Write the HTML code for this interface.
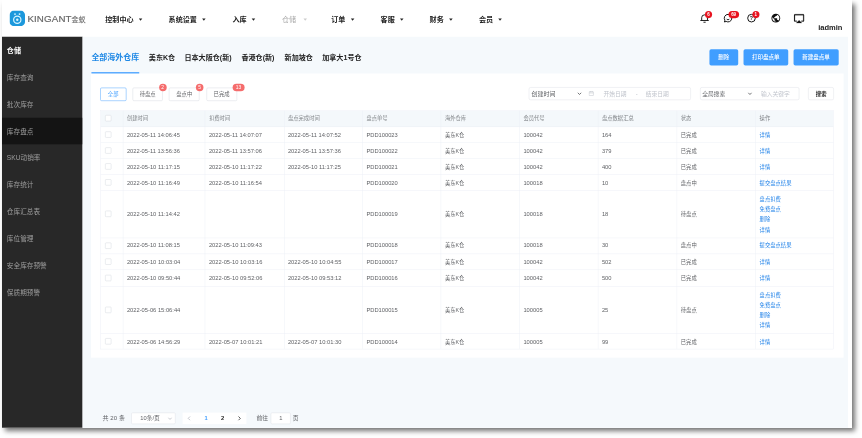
<!DOCTYPE html>
<html lang="zh-CN">
<head>
<meta charset="utf-8">
<title>库存盘点</title>
<style>
*{box-sizing:border-box;margin:0;padding:0}
html,body{width:862px;height:438px;overflow:hidden;background:#fff}
body{position:relative;font-family:"Liberation Sans","Noto Sans CJK SC",sans-serif}
#shadow{position:absolute;left:2px;top:1px;width:850.1px;height:426.6px;background:#fff;box-shadow:3px 3px 5px rgba(0,0,0,.55)}
#page{position:absolute;left:2px;top:0;width:1920px;height:966px;transform:scale(0.4427);transform-origin:0 0;filter:grayscale(0);background:#fff;overflow:hidden;font-size:13px;color:#606266}
#page div,#page span,#page svg{position:absolute}
#page span span{position:static}
.nav{font-size:16px;font-weight:bold;color:#222;top:33px;line-height:22px;white-space:nowrap}
.nav i{position:absolute;right:-20px;top:9px;border:4.500px solid transparent;border-top:5.500px solid #222;border-bottom:0}
.side{left:0;top:82.7px;width:181.6px;height:900px;background:#282828}
.side span{left:11px;font-size:15px;color:#9e9e9e;line-height:20px;white-space:nowrap}
.main{left:181.6px;top:82.7px;width:1729.4px;height:900px;background:#f5f9fc}
.tab{font-size:16px;font-weight:bold;color:#222;top:116.9px;line-height:26px;white-space:nowrap}
.btn{background:#409eff;color:#fff;font-size:12.500px;font-weight:500;text-align:center;border-radius:4px;top:110.7px;height:37.5px;line-height:37.5px;white-space:nowrap}
.panel{left:201.0px;top:166.3px;width:1699.6px;height:641.3px;background:#fff}
.fb{top:197.7px;height:30.7px;line-height:28.7px;border:1px solid #d4d8df;border-radius:3px;font-size:12px;color:#606266;text-align:center;background:#fff;white-space:nowrap}
.bdg{background:#f56c6c;color:#fff;font-size:11px;height:17px;line-height:17px;border-radius:9px;text-align:center;min-width:17px;padding:0 5px}
.inp{top:196.7px;height:29.4px;border:1px solid #dcdfe6;border-radius:4px;background:#fff}
.inp span{top:0;line-height:27.4px;font-size:13px;white-space:nowrap}
.tbl{left:221.6px;top:248.5px;width:1657.8px;height:540.5px;border:1px solid #ebeef5;background:#fff}
.hl{left:0;width:100%;height:1px;background:#ebeef5}
.vl{top:0;height:100%;width:1px;background:#ebeef5}
.th{left:0;top:0;width:100%;background:#f4f8fb}
.c{font-size:13px;color:#606266;white-space:nowrap;line-height:18px}
.hc{font-size:12px;color:#808488;white-space:nowrap;line-height:18px}
.a{font-size:12px;color:#1e80e8;white-space:nowrap;line-height:18px}
.cb{width:14px;height:14px;border:1px solid #d2d6dd;border-radius:2px;background:#fff}
.ph{color:#c0c4cc}
.z{font-size:12px}
.f14{font-size:13.6px}
.pg{font-size:13px;color:#606266;white-space:nowrap;line-height:18px}
</style>
</head>
<body>
<div id="shadow"></div>
<div id="page">
<svg style="left:16.5px;top:23.5px" width="35" height="35" viewBox="0 0 34 34"><rect width="34" height="34" rx="9.500" fill="#1c98dc"/><circle cx="17" cy="20" r="8" fill="none" stroke="#d6f4ff" stroke-width="2.6"/><circle cx="17" cy="20" r="2.6" fill="#d6f4ff"/><circle cx="12" cy="7.5" r="2" fill="#d6f4ff"/><circle cx="22" cy="7.5" r="2" fill="#d6f4ff"/></svg>
<span style="left:57.4px;top:28.5px;font-size:22px;line-height:28px;color:#666;letter-spacing:0.3px;-webkit-text-stroke:0.4px #666;white-space:nowrap">KINGANT</span>
<span style="left:157.0px;top:32.0px;font-size:16px;line-height:24px;color:#707070;-webkit-text-stroke:0.3px #707070;white-space:nowrap">金蚁</span>
<span class="nav" style="left:233.3px">控制中心<i></i></span>
<span class="nav" style="left:376.3px">系统设置<i></i></span>
<span class="nav" style="left:520.4px">入库<i></i></span>
<span class="nav" style="left:632.3px;color:#aaa;font-weight:normal">仓储<i style="right:-25px;border-top-color:#ccc"></i></span>
<span class="nav" style="left:743.8px">订单<i></i></span>
<span class="nav" style="left:855.2px">客服<i></i></span>
<span class="nav" style="left:965.9px">财务<i></i></span>
<span class="nav" style="left:1077.3px">会员<i></i></span>
<svg style="left:1575.9px;top:30.3px" width="22" height="22" viewBox="0 0 22 22"><path d="M4.500 16V10a6.500 6.500 0 0 1 13 0V16" fill="none" stroke="#111" stroke-width="2.100"/><path d="M1.500 16.300H20.500" stroke="#111" stroke-width="2.100"/><path d="M8.500 20.200H13.500" stroke="#111" stroke-width="2.100"/></svg>
<svg style="left:1628.7px;top:30.3px" width="22" height="22" viewBox="0 0 22 22"><path d="M11 2.500a8.500 8.500 0 1 1-4.200 15.900L2.800 19.600L3.900 15.700A8.500 8.500 0 0 1 11 2.500z" fill="none" stroke="#111" stroke-width="2.200" stroke-linejoin="round"/><path d="M7.500 12.500a4 4 0 0 0 7 0" fill="none" stroke="#111" stroke-width="2.100"/></svg>
<svg style="left:1681.8px;top:30.3px" width="22" height="22" viewBox="0 0 22 22"><circle cx="11" cy="11" r="8.600" fill="none" stroke="#111" stroke-width="2.200"/><text x="11" y="15.500" font-size="12" font-weight="bold" text-anchor="middle" fill="#222" font-family="Liberation Sans,sans-serif">?</text></svg>
<svg style="left:1735.5px;top:29.3px" width="24" height="24" viewBox="0 0 24 24"><path d="M12 2C6.480 2 2 6.480 2 12s4.480 10 10 10 10-4.480 10-10S17.520 2 12 2zm-1 17.930c-3.950-.49-7-3.850-7-7.930 0-.62.080-1.210.21-1.790L9 15v1c0 1.100.9 2 2 2v1.930zm6.900-2.540c-.26-.81-1-1.390-1.900-1.390h-1v-3c0-.55-.45-1-1-1H8v-2h2c.55 0 1-.45 1-1V7h2c1.100 0 2-.9 2-2v-.41c2.930 1.190 5 4.060 5 7.410 0 2.080-.8 3.970-2.100 5.390z" fill="#111"/></svg>
<svg style="left:1788.3px;top:28.8px" width="25" height="25" viewBox="0 0 24 24"><path d="M6 22h12l-6-6zM21 3H3c-1.100 0-2 .9-2 2v12c0 1.100.9 2 2 2h4v-2H3V5h18v12h-4v2h4c1.100 0 2-.9 2-2V5c0-1.100-.9-2-2-2z" fill="#111" stroke="#111" stroke-width="0.500"/></svg>
<span style="left:1588.1px;top:25.0px;width:16px;height:16px;line-height:16px;border-radius:8px;background:#e8131f;color:#fff;font-size:10px;text-align:center;font-weight:bold">6</span>
<span style="left:1640.6px;top:25.0px;width:24px;height:16px;line-height:16px;border-radius:8px;background:#e8131f;color:#fff;font-size:10px;text-align:center;font-weight:bold">69</span>
<span style="left:1694.5px;top:25.0px;width:16px;height:16px;line-height:16px;border-radius:8px;background:#e8131f;color:#fff;font-size:10px;text-align:center;font-weight:bold">1</span>
<span style="left:1843.7px;top:50.1px;font-size:17px;font-weight:bold;color:#222;line-height:24px">iadmin</span>
<div class="side">
<div style="left:0;top:183.0px;width:100%;height:60.3px;background:#141414"></div>
<span style="top:21.1px;font-size:16px;font-weight:bold;color:#fff;line-height:22px">仓储</span>
<span style="top:82.6px">库存查询</span>
<span style="top:143.3px">批次库存</span>
<span style="top:204.0px">库存盘点</span>
<span style="top:264.7px">SKU动销率</span>
<span style="top:325.4px">库存统计</span>
<span style="top:386.1px">仓库汇总表</span>
<span style="top:446.8px">库位管理</span>
<span style="top:507.5px">安全库存预警</span>
<span style="top:568.2px">保质期预警</span>
</div>
<div class="main"></div>
<span class="tab" style="left:201.9px;color:#1e88e5;font-size:18px">全部海外仓库</span>
<span class="tab" style="left:331.6px">美东K仓</span>
<span class="tab" style="left:412.0px">日本大阪仓(新)</span>
<span class="tab" style="left:540.8px">香港仓(新)</span>
<span class="tab" style="left:638.4px">新加坡仓</span>
<span class="tab" style="left:723.3px">加拿大1号仓</span>
<div style="left:201.5px;top:162.9px;width:108.9px;height:4px;background:#409eff"></div>
<div class="btn" style="left:1597.7px;width:65.1px">删除</div>
<div class="btn" style="left:1674.5px;width:101.4px">打印盘点单</div>
<div class="btn" style="left:1787.7px;width:102.3px">新建盘点单</div>
<div class="panel"></div>
<div class="fb" style="left:221.6px;width:59.0px;border-color:#409eff;color:#409eff;background:#fff">全部</div>
<div class="fb" style="left:294.8px;width:68.4px">待盘点</div>
<div class="fb" style="left:377.2px;width:69.1px">盘点中</div>
<div class="fb" style="left:461.5px;width:69.1px">已完成</div>
<span class="bdg" style="left:354.5px;top:189.2px;width:17px;padding:0">2</span>
<span class="bdg" style="left:437.9px;top:189.2px;width:17px;padding:0">5</span>
<span class="bdg" style="left:520.5px;top:189.2px;width:27px;padding:0">13</span>
<div class="inp" style="left:1190.4px;width:365.5px"></div>
<span class="c f14" style="left:1196.1px;top:203.8px">创建时间</span>
<svg style="left:1298.5px;top:206.2px" width="11" height="11" viewBox="0 0 10 10"><path d="M1.500 3.200L5 6.800L8.500 3.200" fill="none" stroke="#606266" stroke-width="1.800"/></svg>
<svg style="left:1324.8px;top:205.4px" width="12" height="12" viewBox="0 0 12 12"><rect x="1" y="2" width="10" height="9" rx="1" fill="none" stroke="#c0c4cc" stroke-width="1.200"/><path d="M1 5h10M4 0.500v3M8 0.500v3" stroke="#c0c4cc" stroke-width="1.200"/></svg>
<span class="c ph" style="left:1358.7px;top:203.8px">开始日期</span>
<span class="c ph" style="left:1431.4px;top:203.8px">-</span>
<span class="c ph" style="left:1454.0px;top:203.8px">结束日期</span>
<div class="inp" style="left:1577.4px;width:223.2px"></div>
<span class="c " style="left:1581.7px;top:203.8px">全局搜索</span>
<svg style="left:1684.4px;top:206.2px" width="11" height="11" viewBox="0 0 10 10"><path d="M1.500 3.200L5 6.800L8.500 3.200" fill="none" stroke="#606266" stroke-width="1.800"/></svg>
<span class="c ph" style="left:1714.5px;top:203.8px">输入关键字</span>
<div class="inp" style="left:1821.3px;width:57.6px"></div>
<span class="c" style="left:1838.3px;top:203.8px;color:#222;font-weight:bold;font-size:12px">搜索</span>
<div class="tbl">
<div class="th" style="height:37.3px"></div>
<div class="hl" style="top:36.3px"></div>
<div class="hl" style="top:72.4px"></div>
<div class="hl" style="top:108.6px"></div>
<div class="hl" style="top:144.7px"></div>
<div class="hl" style="top:180.6px"></div>
<div class="hl" style="top:287.0px"></div>
<div class="hl" style="top:323.1px"></div>
<div class="hl" style="top:359.7px"></div>
<div class="hl" style="top:397.0px"></div>
<div class="hl" style="top:503.0px"></div>
<div class="vl" style="left:50.3px"></div>
<div class="vl" style="left:235.5px"></div>
<div class="vl" style="left:414.0px"></div>
<div class="vl" style="left:591.3px"></div>
<div class="vl" style="left:768.6px"></div>
<div class="vl" style="left:945.9px"></div>
<div class="vl" style="left:1123.2px"></div>
<div class="vl" style="left:1301.5px"></div>
<div class="vl" style="left:1479.5px"></div>
<div class="cb" style="left:10.7px;top:10.6px"></div>
<span class="hc" style="left:59.5px;top:9.4px">创建时间</span>
<span class="hc" style="left:244.8px;top:9.4px">扣费时间</span>
<span class="hc" style="left:423.2px;top:9.4px">盘点完成时间</span>
<span class="hc" style="left:600.5px;top:9.4px">盘点单号</span>
<span class="hc" style="left:777.9px;top:9.4px">海外仓库</span>
<span class="hc" style="left:955.2px;top:9.4px">会员代号</span>
<span class="hc" style="left:1132.5px;top:9.4px">盘点数据汇总</span>
<span class="hc" style="left:1310.7px;top:9.4px">状态</span>
<span class="hc" style="left:1488.7px;top:9.4px">操作</span>
<div class="cb" style="left:10.7px;top:47.3px"></div>
<span class="c" style="left:59.5px;top:46.1px">2022-05-11 14:06:45</span>
<span class="c" style="left:244.8px;top:46.1px">2022-05-11 14:07:07</span>
<span class="c" style="left:423.2px;top:46.1px">2022-05-11 14:07:52</span>
<span class="c" style="left:600.5px;top:46.1px">PDD100023</span>
<span class="c z" style="left:777.9px;top:46.1px">美东K仓</span>
<span class="c" style="left:955.2px;top:46.1px">100042</span>
<span class="c" style="left:1132.5px;top:46.1px">164</span>
<span class="c z" style="left:1310.7px;top:46.1px">已完成</span>
<span class="a" style="left:1488.7px;top:46.1px">详情</span>
<div class="cb" style="left:10.7px;top:83.5px"></div>
<span class="c" style="left:59.5px;top:82.3px">2022-05-11 13:56:36</span>
<span class="c" style="left:244.8px;top:82.3px">2022-05-11 13:57:06</span>
<span class="c" style="left:423.2px;top:82.3px">2022-05-11 13:57:36</span>
<span class="c" style="left:600.5px;top:82.3px">PDD100022</span>
<span class="c z" style="left:777.9px;top:82.3px">美东K仓</span>
<span class="c" style="left:955.2px;top:82.3px">100042</span>
<span class="c" style="left:1132.5px;top:82.3px">379</span>
<span class="c z" style="left:1310.7px;top:82.3px">已完成</span>
<span class="a" style="left:1488.7px;top:82.3px">详情</span>
<div class="cb" style="left:10.7px;top:119.6px"></div>
<span class="c" style="left:59.5px;top:118.4px">2022-05-10 11:17:15</span>
<span class="c" style="left:244.8px;top:118.4px">2022-05-10 11:17:22</span>
<span class="c" style="left:423.2px;top:118.4px">2022-05-10 11:17:25</span>
<span class="c" style="left:600.5px;top:118.4px">PDD100021</span>
<span class="c z" style="left:777.9px;top:118.4px">美东K仓</span>
<span class="c" style="left:955.2px;top:118.4px">100042</span>
<span class="c" style="left:1132.5px;top:118.4px">400</span>
<span class="c z" style="left:1310.7px;top:118.4px">已完成</span>
<span class="a" style="left:1488.7px;top:118.4px">详情</span>
<div class="cb" style="left:10.7px;top:155.7px"></div>
<span class="c" style="left:59.5px;top:154.5px">2022-05-10 11:16:49</span>
<span class="c" style="left:244.8px;top:154.5px">2022-05-10 11:16:54</span>
<span class="c" style="left:600.5px;top:154.5px">PDD100020</span>
<span class="c z" style="left:777.9px;top:154.5px">美东K仓</span>
<span class="c" style="left:955.2px;top:154.5px">100018</span>
<span class="c" style="left:1132.5px;top:154.5px">10</span>
<span class="c z" style="left:1310.7px;top:154.5px">盘点中</span>
<span class="a" style="left:1488.7px;top:154.5px">提交盘点结果</span>
<div class="cb" style="left:10.7px;top:226.8px"></div>
<span class="c" style="left:59.5px;top:225.6px">2022-05-10 11:14:42</span>
<span class="c" style="left:600.5px;top:225.6px">PDD100019</span>
<span class="c z" style="left:777.9px;top:225.6px">美东K仓</span>
<span class="c" style="left:955.2px;top:225.6px">100018</span>
<span class="c" style="left:1132.5px;top:225.6px">18</span>
<span class="c z" style="left:1310.7px;top:225.6px">待盘点</span>
<span class="a" style="left:1488.7px;top:191.1px">盘点扣费</span>
<span class="a" style="left:1488.7px;top:214.1px">免费盘点</span>
<span class="a" style="left:1488.7px;top:237.1px">删除</span>
<span class="a" style="left:1488.7px;top:260.1px">详情</span>
<div class="cb" style="left:10.7px;top:298.1px"></div>
<span class="c" style="left:59.5px;top:296.9px">2022-05-10 11:08:15</span>
<span class="c" style="left:244.8px;top:296.9px">2022-05-10 11:09:43</span>
<span class="c" style="left:600.5px;top:296.9px">PDD100018</span>
<span class="c z" style="left:777.9px;top:296.9px">美东K仓</span>
<span class="c" style="left:955.2px;top:296.9px">100018</span>
<span class="c" style="left:1132.5px;top:296.9px">30</span>
<span class="c z" style="left:1310.7px;top:296.9px">盘点中</span>
<span class="a" style="left:1488.7px;top:296.9px">提交盘点结果</span>
<div class="cb" style="left:10.7px;top:334.4px"></div>
<span class="c" style="left:59.5px;top:333.2px">2022-05-10 10:03:04</span>
<span class="c" style="left:244.8px;top:333.2px">2022-05-10 10:03:16</span>
<span class="c" style="left:423.2px;top:333.2px">2022-05-10 10:04:55</span>
<span class="c" style="left:600.5px;top:333.2px">PDD100017</span>
<span class="c z" style="left:777.9px;top:333.2px">美东K仓</span>
<span class="c" style="left:955.2px;top:333.2px">100042</span>
<span class="c" style="left:1132.5px;top:333.2px">502</span>
<span class="c z" style="left:1310.7px;top:333.2px">已完成</span>
<span class="a" style="left:1488.7px;top:333.2px">详情</span>
<div class="cb" style="left:10.7px;top:371.4px"></div>
<span class="c" style="left:59.5px;top:370.2px">2022-05-10 09:50:44</span>
<span class="c" style="left:244.8px;top:370.2px">2022-05-10 09:52:06</span>
<span class="c" style="left:423.2px;top:370.2px">2022-05-10 09:53:12</span>
<span class="c" style="left:600.5px;top:370.2px">PDD100016</span>
<span class="c z" style="left:777.9px;top:370.2px">美东K仓</span>
<span class="c" style="left:955.2px;top:370.2px">100042</span>
<span class="c" style="left:1132.5px;top:370.2px">500</span>
<span class="c z" style="left:1310.7px;top:370.2px">已完成</span>
<span class="a" style="left:1488.7px;top:370.2px">详情</span>
<div class="cb" style="left:10.7px;top:443.0px"></div>
<span class="c" style="left:59.5px;top:441.8px">2022-05-06 15:06:44</span>
<span class="c" style="left:600.5px;top:441.8px">PDD100015</span>
<span class="c z" style="left:777.9px;top:441.8px">美东K仓</span>
<span class="c" style="left:955.2px;top:441.8px">100005</span>
<span class="c" style="left:1132.5px;top:441.8px">25</span>
<span class="c z" style="left:1310.7px;top:441.8px">待盘点</span>
<span class="a" style="left:1488.7px;top:407.3px">盘点扣费</span>
<span class="a" style="left:1488.7px;top:430.3px">免费盘点</span>
<span class="a" style="left:1488.7px;top:453.3px">删除</span>
<span class="a" style="left:1488.7px;top:476.3px">详情</span>
<div class="cb" style="left:10.7px;top:514.2px"></div>
<span class="c" style="left:59.5px;top:513.0px">2022-05-06 14:56:29</span>
<span class="c" style="left:244.8px;top:513.0px">2022-05-07 10:01:21</span>
<span class="c" style="left:423.2px;top:513.0px">2022-05-07 10:01:30</span>
<span class="c" style="left:600.5px;top:513.0px">PDD100014</span>
<span class="c z" style="left:777.9px;top:513.0px">美东K仓</span>
<span class="c" style="left:955.2px;top:513.0px">100005</span>
<span class="c" style="left:1132.5px;top:513.0px">99</span>
<span class="c z" style="left:1310.7px;top:513.0px">已完成</span>
<span class="a" style="left:1488.7px;top:513.0px">详情</span>
</div>
<span class="pg" style="left:227.0px;top:936.1px;font-size:13.600px;letter-spacing:0.2px">共 20 条</span>
<div style="left:292.3px;top:932.0px;width:99.6px;height:26.0px;border:1px solid #dcdfe6;border-radius:3px;background:#fff"></div>
<span class="pg" style="left:312.4px;top:936.1px;">10条/页</span>
<svg style="left:374.4px;top:939.6px" width="11" height="11" viewBox="0 0 10 10"><path d="M1.500 3.200L5 6.800L8.500 3.200" fill="none" stroke="#c0c4cc" stroke-width="1.800"/></svg>
<div style="left:407.5px;top:932.0px;width:144.1px;height:26.0px;background:#fff"></div>
<svg style="left:417.1px;top:939.1px" width="12" height="12" viewBox="0 0 10 10"><path d="M6.500 1.500L3 5L6.500 8.500" fill="none" stroke="#b4b8c0" stroke-width="1.500"/></svg>
<span class="pg" style="left:457.6px;top:936.1px;color:#409eff;font-weight:bold">1</span>
<span class="pg" style="left:494.7px;top:936.1px;color:#222;font-weight:bold">2</span>
<svg style="left:530.0px;top:939.1px" width="12" height="12" viewBox="0 0 10 10"><path d="M3.500 1.500L7 5L3.500 8.500" fill="none" stroke="#303133" stroke-width="1.500"/></svg>
<span class="pg" style="left:574.9px;top:936.1px;">前往</span>
<div style="left:606.5px;top:932.0px;width:45.0px;height:26.0px;border:1px solid #dcdfe6;border-radius:3px;background:#fff"></div>
<span class="pg" style="left:626.4px;top:936.1px;">1</span>
<span class="pg" style="left:656.7px;top:936.1px;">页</span>
</div>
</body>
</html>
